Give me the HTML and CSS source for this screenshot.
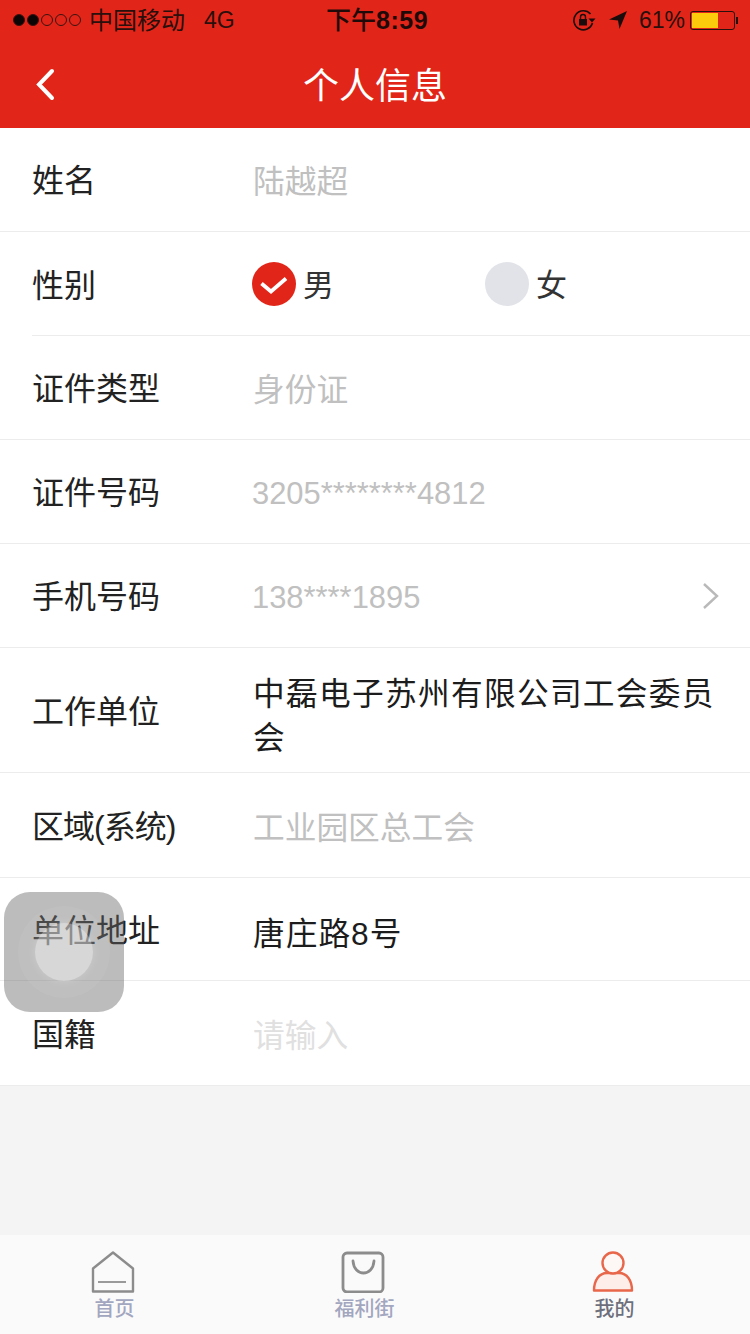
FILE: index.html
```html
<!DOCTYPE html>
<html lang="zh-CN">
<head>
    <meta charset="UTF-8">
    <title>个人信息</title>
    <link rel="stylesheet" href="styles.css">
</head>
<body>
    <div class="page">
        <div class="header">
            <div class="status-bar">
                <div class="status-left">
                    <span class="signal">
                        <i class="dot on"></i><i class="dot on"></i><i class="dot"></i><i class="dot"></i><i class="dot"></i>
                    </span>
                    <span class="carrier">中国移动</span>
                    <span class="network">4G</span>
                </div>
                <div class="status-time">下午<b>8:59</b></div>
                <div class="status-right">
                    <svg class="lock-icon" width="24" height="22" viewBox="0 0 24 22">
                        <path d="M18.500 5A9.500 9.500 0 1 0 20.500 14" fill="none" stroke="#1a0c0c" stroke-width="1.600"/>
                        <path d="M16.500 9.500h7L20 13.500z" fill="#1a0c0c"/>
                        <rect x="7" y="10" width="8" height="6.500" fill="#1a0c0c"/>
                        <path d="M8.500 10V8a2.500 2.500 0 0 1 5 0v2" fill="none" stroke="#1a0c0c" stroke-width="1.400"/>
                    </svg>
                    <svg class="arrow-icon" width="20" height="20" viewBox="0 0 20 20">
                        <path d="M19 1L1 9.500l9 1 1.500 8.500z" fill="#1a0c0c"/>
                    </svg>
                    <span class="battery-pct">61%</span>
                    <span class="battery"><span class="battery-fill"></span></span>
                    <span class="battery-cap"></span>
                </div>
            </div>
            <div class="nav-bar">
                <svg class="back-icon" width="24" height="36" viewBox="0 0 24 36">
                    <path d="M18 5L5 18.500 18 32" fill="none" stroke="#fff" stroke-width="4" stroke-linecap="round"/>
                </svg>
                <div class="nav-title">个人信息</div>
            </div>
        </div>

        <div class="form">
            <div class="row">
                <div class="label">姓名</div>
                <div class="value muted">陆越超</div>
            </div>
            <div class="row row-inset">
                <div class="label">性别</div>
                <div class="gender">
                    <div class="gender-option">
                        <span class="radio checked">
                            <svg width="44" height="44" viewBox="0 0 44 44">
                                <path d="M9.500 21.500l9.500 8 15-13" fill="none" stroke="#fff" stroke-width="3.800"/>
                            </svg>
                        </span>
                        <span class="gender-text">男</span>
                    </div>
                    <div class="gender-option">
                        <span class="radio"></span>
                        <span class="gender-text">女</span>
                    </div>
                </div>
            </div>
            <div class="row">
                <div class="label">证件类型</div>
                <div class="value muted">身份证</div>
            </div>
            <div class="row">
                <div class="label">证件号码</div>
                <div class="value muted digits">3205********4812</div>
            </div>
            <div class="row">
                <div class="label">手机号码</div>
                <div class="value muted digits">138****1895</div>
                <svg class="chevron" width="18" height="28" viewBox="0 0 18 28">
                    <path d="M2 2l13 12L2 26" fill="none" stroke="#b9b9b9" stroke-width="2.400"/>
                </svg>
            </div>
            <div class="row row-tall">
                <div class="label">工作单位</div>
                <div class="value wrap">中磊电子苏州有限公司工会委员会</div>
            </div>
            <div class="row row-area">
                <div class="label label-area">区域(系统)</div>
                <div class="value muted">工业园区总工会</div>
            </div>
            <div class="row row-address">
                <div class="label">单位地址</div>
                <div class="value address">唐庄路8号</div>
            </div>
            <div class="row row-last">
                <div class="label">国籍</div>
                <div class="value faint">请输入</div>
            </div>
        </div>

        <div class="spacer"></div>

        <div class="tab-bar">
            <div class="tab">
                <svg width="44" height="42" viewBox="0 0 44 42">
                    <path d="M22 1.500L2 17.500v23h40v-23z" fill="none" stroke="#8c8c8c" stroke-width="2.400" stroke-linejoin="round"/>
                    <path d="M7 31h28" stroke="#9a9a9a" stroke-width="2"/>
                </svg>
                <span class="tab-label">首页</span>
            </div>
            <div class="tab">
                <svg width="44" height="42" viewBox="0 0 44 42">
                    <rect x="2" y="2" width="40" height="39" rx="4" fill="none" stroke="#8c8c8c" stroke-width="2.800"/>
                    <path d="M12 10c1 16 20 16 21 0" fill="none" stroke="#8c8c8c" stroke-width="2.800" stroke-linecap="round"/>
                </svg>
                <span class="tab-label">福利街</span>
            </div>
            <div class="tab active">
                <svg width="44" height="42" viewBox="0 0 44 42">
                    <path d="M3 39.500c0-10 5-17.500 13-17.500h12c8 0 13 7.500 13 17.500z" fill="#fdeee9" stroke="#e8664a" stroke-width="2.400" stroke-linejoin="round"/>
                    <circle cx="22" cy="12" r="10.500" fill="#fdf7f5" stroke="#e8664a" stroke-width="2.400"/>
                </svg>
                <span class="tab-label">我的</span>
            </div>
        </div>

        <div class="assistive"><div class="assistive-ring"><div class="assistive-core"></div></div></div>
    </div>
</body>
</html>
```

FILE: styles.css
```css
* {
    box-sizing: border-box;
}
body {
    margin: 0;
    font-family: "Liberation Sans", "Noto Sans CJK SC", sans-serif;
    background-color: #f4f4f4;
}
.page {
    position: relative;
    width: 750px;
    height: 1334px;
    display: flex;
    flex-direction: column;
    overflow: hidden;
}
.header {
    background: #e12619;
    height: 128px;
    flex-shrink: 0;
}
.status-bar {
    height: 40px;
    padding: 0 12px 0 13px;
    display: flex;
    justify-content: space-between;
    align-items: center;
    position: relative;
    color: #2a0f0d;
    font-size: 24px;
}
.status-left, .status-right {
    display: flex;
    align-items: center;
}
.signal {
    display: flex;
    gap: 2px;
    margin-right: 8px;
}
.dot {
    width: 12px;
    height: 12px;
    border-radius: 50%;
    border: 1px solid #3a1210;
}
.dot.on {
    background: #0c0505;
}
.carrier {
    margin-bottom: 4px;
}
.network {
    margin-left: 19px;
    font-size: 23px;
}
.status-time {
    position: absolute;
    left: 326px;
    top: 2px;
    line-height: 36px;
    font-size: 25px;
    font-weight: 500;
    color: #1f0a09;
}
.status-time b {
    letter-spacing: 0.500px;
}
.lock-icon {
    margin-right: 12px;
}
.arrow-icon {
    margin-right: 11px;
}
.battery-pct {
    font-size: 23px;
    margin-right: 5px;
}
.battery {
    width: 45px;
    height: 19px;
    border: 1px solid #2a0f0d;
    border-radius: 3px;
    padding: 1px;
    display: flex;
}
.battery-fill {
    width: 26px;
    background: #fccb0b;
}
.battery-cap {
    width: 2px;
    height: 7px;
    margin-left: 1px;
    background: #2a0f0d;
}
.nav-bar {
    height: 88px;
    position: relative;
    display: flex;
    align-items: center;
    justify-content: center;
    padding-top: 6px;
}
.back-icon {
    position: absolute;
    left: 34px;
    top: 26px;
}
.nav-title {
    color: #fff;
    font-size: 36px;
    line-height: 80px;
}
.form {
    background: #fff;
    border-bottom: 1px solid #ececec;
    flex-shrink: 0;
}
.row {
    height: 104px;
    display: flex;
    align-items: center;
    padding-left: 32px;
    border-bottom: 1px solid #ececec;
    position: relative;
}
.row-inset {
    border-bottom: none;
}
.row-inset::after {
    content: "";
    position: absolute;
    left: 32px;
    right: 0;
    bottom: 0;
    height: 1px;
    background: #ececec;
}
.row-tall {
    height: 125px;
}
.row-area {
    height: 105px;
}
.row-address {
    height: 103px;
}
.row-last {
    border-bottom: none;
}
.label {
    width: 221px;
    font-size: 32px;
    color: #222;
    flex-shrink: 0;
    margin-bottom: 3px;
}
.label-area {
    letter-spacing: -1px;
}
.value {
    font-size: 31.700px;
    color: #1c1c1c;
    margin-bottom: 1px;
}
.digits {
    font-size: 30.900px;
    margin: 4px 0 0 -1px;
}
.wrap {
    width: 470px;
    line-height: 44px;
    letter-spacing: 1.300px;
    margin: 12px 0 0 0;
}
.address {
    letter-spacing: 1px;
    margin: 3px 0 0 0;
}
.muted {
    color: #c0c0c0;
}
.faint {
    color: #e0e0e0;
}
.chevron {
    position: absolute;
    right: 30px;
    top: 38px;
}
.gender {
    display: flex;
    margin-left: -1px;
}
.gender-option {
    width: 233px;
    display: flex;
    align-items: center;
    gap: 7px;
}
.gender-text {
    font-size: 31px;
    color: #333;
    margin-bottom: 3px;
}
.radio {
    width: 44px;
    height: 44px;
    border-radius: 50%;
    background: #e1e3e8;
    display: block;
}
.radio.checked {
    background: #e12619;
}
.radio svg {
    display: block;
}
.spacer {
    flex: 1;
}
.tab-bar {
    height: 99px;
    background: #fafafa;
    display: flex;
    flex-shrink: 0;
    padding: 16px 0 0 0;
}
.tab {
    width: 250px;
    display: flex;
    flex-direction: column;
    align-items: center;
    flex-shrink: 0;
}
.tab:first-child {
    margin-left: -12px;
}
.tab svg {
    display: block;
}
.tab-label {
    font-size: 20px;
    line-height: 24px;
    margin: 4px 0 0 3px;
    color: #a2a6bf;
    font-weight: 500;
}
.tab.active .tab-label {
    color: #6d6f7c;
}
.assistive {
    position: absolute;
    left: 4px;
    top: 892px;
    width: 120px;
    height: 120px;
    border-radius: 26px;
    background: rgba(100, 100, 100, 0.43);
    display: flex;
    align-items: center;
    justify-content: center;
}
.assistive-ring {
    width: 92px;
    height: 92px;
    border-radius: 50%;
    background: rgba(255, 255, 255, 0.05);
    display: flex;
    align-items: center;
    justify-content: center;
}
.assistive-core {
    width: 58px;
    height: 58px;
    border-radius: 50%;
    background: rgba(255, 255, 255, 0.38);
    box-shadow: 0 0 8px rgba(255, 255, 255, 0.2);
}
```
